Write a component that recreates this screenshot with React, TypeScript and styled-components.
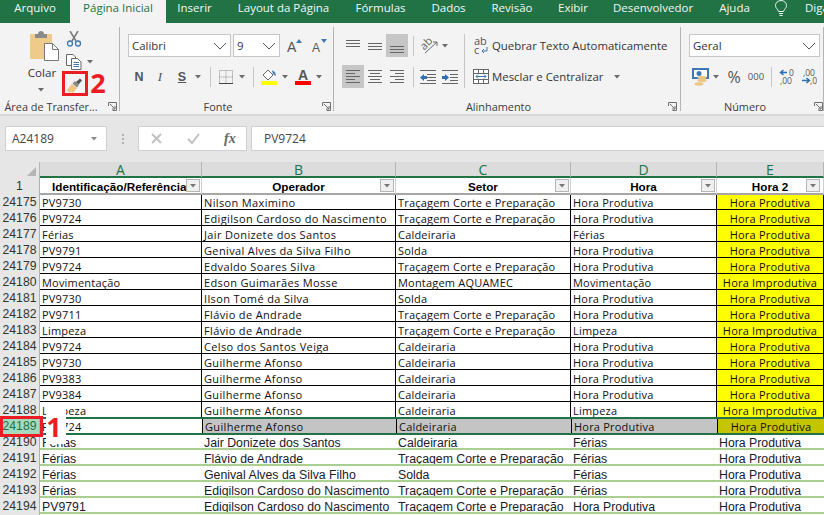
import React from "react";
import styled, { createGlobalStyle } from "styled-components";

const Global = createGlobalStyle`
  html, body { margin: 0; padding: 0; background: #fff; overflow: hidden; }
  #root { width: 824px; height: 515px; overflow: hidden; }
  * { box-sizing: border-box; }
`;
const UI = `"Open Sans", "Noto Sans", sans-serif`;
const Page = styled.div`position: relative; width: 824px; height: 515px; overflow: hidden; background: #fff; font-family: ${UI}; color: #333;`;

const TabBar = styled.div`display: flex; height: 23px; background: #217346; overflow: hidden;`;
const Tab = styled.div<{ $active?: boolean; $w: number }>`
  width: ${p => p.$w}px; flex: none; height: 23px; line-height: 16px; text-align: center; white-space: nowrap;
  font-size: 11.5px;
  color: ${p => (p.$active ? "#217346" : "#f2f7f4")};
  background: ${p => (p.$active ? "#f3f3f3" : "transparent")};
`;
const Bulb = styled.div`width: 25px; flex: none; margin-left: 3px; display: flex; justify-content: center;`;
const TellMe = styled.div`flex: none; padding-left: 12px; font-size: 11.5px; line-height: 16px; color: #f2f7f4; white-space: nowrap;`;

const Ribbon = styled.div`display: flex; height: 93px; background: #f3f3f3; border-bottom: 2px solid #d8d8d8;`;
const Group = styled.div<{ $w: number }>`
  position: relative; width: ${p => p.$w}px; flex: none; display: flex; flex-direction: column; height: 91px;
  &::after { content: ""; position: absolute; right: 0; top: 4px; bottom: 3px; width: 1px; background: #b4b4b4; }
`;
const GroupBody = styled.div`flex: 1; display: flex; min-height: 0;`;
const GroupFooter = styled.div<{ $pr: number }>`
  height: 16px; position: relative; text-align: center; font-size: 10.9px; line-height: 17px; white-space: nowrap; color: #3c3c3c;
  padding-right: ${p => p.$pr}px;
`;
const LauncherWrap = styled.span<{ $r: number }>`position: absolute; right: ${p => p.$r}px; top: 4px; display: block; width: 9px; height: 9px; line-height: 0;`;
const Launcher = ({ r }: { r: number }) => (
  <LauncherWrap $r={r}>
    <svg width="9" height="9" viewBox="0 0 9 9" fill="none" stroke="#707070" strokeWidth="1">
      <path d="M0.5 4V.5H8.5V8.5H4.5" /><path d="M2 2L7 7M7 4V7H4" />
    </svg>
  </LauncherWrap>
);

const ClipBody = styled.div`display: flex; padding: 8px 0 0 30px; width: 100%;`;
const PasteCol = styled.div`width: 36px; flex: none; display: flex; flex-direction: column; font-size: 11.6px; line-height: 15px; color: #333;`;
const PasteLabel = styled.div`margin: 4px 0 0 -3px; width: 30px; text-align: center;`;
const CaretRow = styled.div<{ $ml: number; $mt?: number }>`margin: ${p => p.$mt ?? 0}px 0 0 ${p => p.$ml}px; line-height: 0;`;
const ClipTools = styled.div`display: flex; flex-direction: column; gap: 7px; align-items: flex-start;`;
const ToolRow = styled.div`display: flex; align-items: center; gap: 5px; line-height: 0;`;

const Caret = ({ c = "#6a6a6a" }: { c?: string }) => (
  <svg width="6" height="4" viewBox="0 0 6 4"><path d="M0 0H6L3 3.5Z" fill={c} /></svg>
);
const Chevron = () => (
  <svg width="14" height="8" viewBox="0 0 14 8" fill="none" stroke="#555" strokeWidth="1"><path d="M1 1L7 7L13 1" /></svg>
);

const Stack = styled.div<{ $pl: number }>`display: flex; flex-direction: column; padding: 11px 0 0 ${p => p.$pl}px; gap: 8px;`;
const HRow = styled.div`display: flex; align-items: center; height: 23px; font-size: 11.6px; white-space: nowrap; color: #333;`;
const Combo = styled.div<{ $w: number }>`
  width: ${p => p.$w}px; height: 23px; flex: none; background: #fff; border: 1px solid #c6c6c6; display: flex; align-items: center; justify-content: space-between;
  padding: 0 3px; font-size: 11.4px; color: #333; margin-right: 2px;
`;
const Cell = styled.div<{ $w: number; $on?: boolean; $ml?: number }>`
  width: ${p => p.$w}px; flex: none; height: 23px; display: flex; align-items: center; justify-content: center; gap: 3px; line-height: 0;
  margin-left: ${p => p.$ml ?? 0}px;
  background: ${p => (p.$on ? "#c6c6c6" : "transparent")};
`;
const BoldLetter = styled.span<{ $s?: string; $f?: string; $u?: boolean }>`
  font: ${p => p.$s ?? "bold 12.5px"} ${p => p.$f ?? `"Liberation Sans"`}, sans-serif; color: #555; line-height: 14px;
  text-decoration: ${p => (p.$u ? "underline" : "none")};
`;
const VSep = styled.div<{ $ml?: number; $mr?: number; $h?: number }>`width: 1px; height: ${p => p.$h ?? 20}px; background: #c6c6c6; flex: none; margin: 0 ${p => p.$mr ?? 0}px 0 ${p => p.$ml ?? 0}px;`;

const LinesIcon = ({ y, x }: { y: number[]; x: [number, number][] }) => (
  <svg width="16" height="16" viewBox="0 0 16 16" stroke="#666" strokeWidth="1">
    {y.map((v, i) => <path key={i} d={`M${x[i][0]} ${v + 0.5}H${x[i][1]}`} />)}
  </svg>
);
const full: [number, number][] = [[1, 15], [1, 15], [1, 15]];
const short: [number, number][] = [[1, 15], [1, 10], [1, 15], [1, 10], [1, 15]];
const center: [number, number][] = [[1, 15], [3, 13], [1, 15], [3, 13], [1, 15]];
const right: [number, number][] = [[1, 15], [6, 15], [1, 15], [6, 15], [1, 15]];

const AlignBody = styled.div`display: flex; padding: 11px 0 0 8px;`;
const AlignColumn = styled.div`display: flex; flex-direction: column; gap: 8px;`;
const AlignActions = styled(AlignColumn)`padding-left: 8px;`;
const ActionRow = styled.div`display: flex; align-items: center; height: 23px; gap: 3px; font-size: 11.4px; color: #333; white-space: nowrap;`;
const CaretGap = styled.span`margin-left: 8px; line-height: 0;`;

const FormulaArea = styled.div`height: 46px; background: #e6e6e6; display: flex; padding: 10px 0 0 5px; align-items: flex-start;`;
const NameBox = styled.div`width: 102px; height: 25px; background: #fff; border: 1px solid #d0d0d0; display: flex; align-items: center; justify-content: space-between; padding: 0 9px 0 6px; font-size: 12px; color: #444;`;
const Dots = styled.div`width: 31px; flex: none; display: flex; flex-direction: column; align-items: center; justify-content: center; gap: 2px; height: 25px;`;
const Dot = styled.i`display: block; width: 2px; height: 2px; background: #b0b0b0;`;
const FxBox = styled.div`width: 109px; height: 25px; background: #fff; border: 1px solid #d0d0d0; display: flex; align-items: center; padding-left: 12px; margin-right: 4px;`;
const FxCross = styled.span`line-height: 0; margin-right: 25px;`;
const FxCheck = styled.span`line-height: 0; margin-right: 24px;`;
const Fx = styled.span`font: italic bold 14px "Liberation Serif", serif; color: #666;`;
const FormulaInput = styled.div`flex: 1; height: 25px; background: #fff; border: 1px solid #d0d0d0; border-right: none; display: flex; align-items: center; padding-left: 12px; font-size: 12px; color: #444;`;

const COLS = "40px 162px 194px 175px 146px 107px";
const ColHead = styled.div`display: grid; grid-template-columns: ${COLS}; height: 16px; background: #e6e6e6;`;
const Corner = styled.div`background: #e6e6e6; border-right: 1px solid #b5b5b5; display: flex; align-items: flex-end; justify-content: flex-end; padding: 0 3px 2px 0; line-height: 0;`;
const ColLetter = styled.div`
  background: #dcdcdc; border-right: 1px solid #b5b5b5; border-bottom: 2px solid #217346; color: #217346;
  font: 14px/15px "Open Sans", sans-serif; text-align: center; height: 16px;
`;
const Row = styled.div`display: grid; grid-template-columns: ${COLS}; height: 16px;`;
const RowNum = styled.div<{ $sel?: boolean }>`
  background: ${p => (p.$sel ? "#a6dabd" : "#e6e6e6")}; color: ${p => (p.$sel ? "#217346" : "#333")};
  border-right: 1px solid #b0b0b0;
  font: 12.2px/17px "Liberation Sans", sans-serif; text-align: center;
`;
const HeadCell = styled.div`
  position: relative; background: #fff; border-bottom: 2px solid #a6a6a6; border-right: 1px solid #d0d0d0;
  font: bold 11.7px/18px "Liberation Sans", sans-serif; color: #000; text-align: center; overflow: hidden; white-space: nowrap;
  &:last-child > span { right: 3px; }
`;
const HeadLeft = styled(HeadCell)`text-align: left; padding-left: 12px;`;
const Filter = styled.span`
  position: absolute; right: 1px; top: 1px; width: 14px; height: 13px; background: #f0f0f0; border: 1px solid #b5b5b5;
  display: flex; align-items: center; justify-content: center; line-height: 0;
`;
type V = "plain" | "active" | "light";
const DataCell = styled.div<{ $v: V; $y?: boolean; $first?: boolean }>`
  white-space: nowrap; overflow: hidden; height: 16px;
  ${p => p.$v === "light"
    ? `font: 12.3px/18px "Liberation Sans", sans-serif; color: #1a1a2a; background: #fff; border-bottom: 2px solid #a9d08e; padding-left: 2px;`
    : p.$v === "active"
    ? `font: 11px/17px "Open Sans", sans-serif; letter-spacing: .2px; color: #111; padding-left: ${p.$y ? 0 : 2}px; text-align: ${p.$y ? "center" : "left"};
       background: ${p.$first ? "#fff" : p.$y ? "#c4c400" : "#c4c4c4"}; border-left: ${p.$first ? "none" : "1px solid #000"};
       &:nth-child(3) { letter-spacing: .36px; }`
    : `font: 11px/17px "Open Sans", sans-serif; letter-spacing: .2px; color: #111; border-bottom: 1px solid #000; border-right: 1px solid #000;
       padding-left: ${p.$y ? 0 : 2}px; text-align: ${p.$y ? "center" : "left"}; background: ${p.$y ? "#ffff00" : "#fff"};
       &:nth-child(3) { letter-spacing: .36px; }`}
`;

const SelectionBand = styled.div`position: absolute; left: 40px; top: 417px; right: 0; height: 18px; border-top: 2px solid #217346; border-bottom: 2px solid #217346;`;
const Patch = styled.div`position: absolute; left: 46px; top: 404px; width: 20px; height: 40px; background: #fff;`;
const RedBox = styled.div<{ $l: number; $t: number; $w: number; $h: number }>`
  position: absolute; left: ${p => p.$l}px; top: ${p => p.$t}px; width: ${p => p.$w}px; height: ${p => p.$h}px; border: 3px solid #ed1c24;
`;
const Mark = styled.div<{ $l: number; $t: number }>`
  position: absolute; left: ${p => p.$l}px; top: ${p => p.$t}px; width: 20px; height: 26px;
  font: bold 27px/26px "Open Sans", sans-serif; color: #ed1c24; text-align: center;
`;

const T = "Traçagem Corte e Preparação", C = "Caldeiraria", H = "Hora Produtiva", I = "Hora Improdutiva", G = "Guilherme Afonso", E = "Edigilson Cardoso do Nascimento";
const rows: [number, string, string, string, string, string][] = [
  [24175, "PV9730", "Nilson Maximino", T, H, H],
  [24176, "PV9724", E, T, H, H],
  [24177, "Férias", "Jair Donizete dos Santos", C, "Férias", H],
  [24178, "PV9791", "Genival Alves da Silva Filho", "Solda", H, H],
  [24179, "PV9724", "Edvaldo Soares Silva", T, H, H],
  [24180, "Movimentação", "Edson Guimarães Mosse", "Montagem AQUAMEC", "Movimentação", I],
  [24181, "PV9730", "Ilson Tomé da Silva", "Solda", H, H],
  [24182, "PV9711", "Flávio de Andrade", T, H, H],
  [24183, "Limpeza", "Flávio de Andrade", T, "Limpeza", I],
  [24184, "PV9724", "Celso dos Santos Veiga", C, H, H],
  [24185, "PV9730", G, C, H, H],
  [24186, "PV9383", G, C, H, H],
  [24187, "PV9384", G, C, H, H],
  [24188, "Limpeza", G, C, "Limpeza", I],
  [24189, "PV9724", G, C, H, H],
  [24190, "Férias", "Jair Donizete dos Santos", C, "Férias", H],
  [24191, "Férias", "Flávio de Andrade", T, "Férias", H],
  [24192, "Férias", "Genival Alves da Silva Filho", "Solda", "Férias", H],
  [24193, "Férias", E, T, "Férias", H],
  [24194, "PV9791", E, T, H, H],
];
const heads = ["Operador", "Setor", "Hora", "Hora 2"];

export default function App() {
  return (
    <Page>
      <Global />
      <TabBar>
        <Tab $w={70}>Arquivo</Tab>
        <Tab $w={96} $active>Página Inicial</Tab>
        <Tab $w={57}>Inserir</Tab>
        <Tab $w={121}>Layout da Página</Tab>
        <Tab $w={73}>Fórmulas</Tab>
        <Tab $w={63}>Dados</Tab>
        <Tab $w={64}>Revisão</Tab>
        <Tab $w={58}>Exibir</Tab>
        <Tab $w={102}>Desenvolvedor</Tab>
        <Tab $w={61}>Ajuda</Tab>
        <Bulb>
          <svg width="14" height="17" viewBox="0 0 14 17" fill="none" stroke="#e8f1ec" strokeWidth="1"><path d="M4.5 11.5C4 9 1.5 8.5 1.5 5.5a5.5 5 0 0 1 11 0C12.5 8.5 10 9 9.5 11.5Z" /><path d="M5 13.5H9M5.5 15.5H8.5" /></svg>
        </Bulb>
        <TellMe>Diga</TellMe>
      </TabBar>

      <Ribbon>
        <Group $w={120}>
          <GroupBody>
            <ClipBody>
              <PasteCol>
                <svg width="29" height="30" viewBox="0 0 29 30">
                  <rect x="0" y="3" width="22" height="25" rx="1" fill="#eecb8a" />
                  <path d="M8 3C8 1 9.500 0 11 0S14 1 14 3H17V7H5V3Z" fill="#8a8a8a" />
                  <path d="M14.500 12.500H22.500L28.500 18.500V29.500H14.500Z" fill="#fff" stroke="#777" />
                  <path d="M22.500 12.500V18.500H28.500" fill="none" stroke="#777" />
                </svg>
                <PasteLabel>Colar</PasteLabel>
                <CaretRow $ml={8} $mt={8}><Caret /></CaretRow>
              </PasteCol>
              <ClipTools>
                <ToolRow>
                  <svg width="16" height="16" viewBox="0 0 16 16" fill="none">
                    <path d="M4 0L10 10M12 0L6 10" stroke="#7a7a7a" strokeWidth="1.5" />
                    <circle cx="4" cy="12.5" r="2.500" stroke="#3f78b5" strokeWidth="1.3" />
                    <circle cx="12" cy="12.5" r="2.500" stroke="#3f78b5" strokeWidth="1.3" />
                  </svg>
                </ToolRow>
                <ToolRow>
                  <svg width="16" height="16" viewBox="0 0 16 16" fill="#fff" stroke="#666">
                    <path d="M.5 .5H7L9.5 3V11.5H.5Z" /><path d="M5.5 4.5H11.5L15 8V15.5H5.5Z" />
                    <path d="M7.5 8.5H13M7.5 10.5H13M7.5 12.5H13" stroke="#3f78b5" />
                  </svg>
                  <Caret />
                </ToolRow>
                <ToolRow>
                  <svg width="18" height="18" viewBox="0 0 18 18">
                    <path d="M1 13L6 7L11 11L7 16L5 14.500L3 16Z" fill="#edc585" />
                    <path d="M6.500 6.500L9 4L13 8L11 10.500Z" fill="#8a8a8a" />
                    <path d="M10 5L14 1.500L16 3.500L12.500 7.500Z" fill="#555" />
                  </svg>
                </ToolRow>
              </ClipTools>
            </ClipBody>
          </GroupBody>
          <GroupFooter $pr={18}>Área de Transfer...<Launcher r={3} /></GroupFooter>
        </Group>

        <Group $w={214}>
          <GroupBody>
            <Stack $pl={8}>
              <HRow>
                <Combo $w={103}>Calibri<Chevron /></Combo>
                <Combo $w={47}>9<Chevron /></Combo>
                <Cell $w={22} $ml={2}>
                  <svg width="16" height="14" viewBox="0 0 16 14"><text x="0" y="13" fontFamily="Liberation Sans" fontSize="14" fill="#555">A</text><path d="M9 4L12 0L15 4Z" fill="#3f78b5" /></svg>
                </Cell>
                <Cell $w={22} $ml={2}>
                  <svg width="15" height="14" viewBox="0 0 15 14"><text x="0" y="13" fontFamily="Liberation Sans" fontSize="12" fill="#555">A</text><path d="M9 0H15L12 4Z" fill="#3f78b5" /></svg>
                </Cell>
              </HRow>
              <HRow>
                <Cell $w={22}><BoldLetter>N</BoldLetter></Cell>
                <Cell $w={20}><BoldLetter $s="italic 13px" $f={`"Liberation Serif"`}>I</BoldLetter></Cell>
                <Cell $w={24}><BoldLetter $u>S</BoldLetter></Cell>
                <Cell $w={8}><Caret /></Cell>
                <VSep $ml={8} $mr={5} />
                <Cell $w={20}>
                  <svg width="14" height="14" viewBox="0 0 14 14" fill="none" stroke="#8a8a8a" strokeDasharray="1 1"><path d="M.5 .5H13.5V13.5H.5ZM.5 7H13.5M7 .5V13.5" /><path d="M0 13.5H14" stroke="#444" strokeDasharray="none" /></svg>
                </Cell>
                <Cell $w={8} $ml={2}><Caret /></Cell>
                <VSep $ml={7} $mr={7} />
                <Cell $w={16}>
                  <svg width="16" height="17" viewBox="0 0 16 17"><path d="M2 7L7 2L12 7L7 12Z" fill="#fff" stroke="#666" /><path d="M11 2.500Q14.500 3 15 8L12 6Z" fill="#3f78b5" /><rect x="0" y="13" width="16" height="4" fill="#ffff00" /></svg>
                </Cell>
                <Cell $w={8} $ml={4}><Caret /></Cell>
                <Cell $w={16} $ml={6}>
                  <svg width="16" height="17" viewBox="0 0 16 17"><text x="3" y="12" fontFamily="Liberation Sans" fontWeight="bold" fontSize="14" fill="#555">A</text><rect x="0" y="13" width="16" height="4" fill="#ff0000" /></svg>
                </Cell>
                <Cell $w={8} $ml={4}><Caret /></Cell>
              </HRow>
            </Stack>
          </GroupBody>
          <GroupFooter $pr={18}>Fonte<Launcher r={3} /></GroupFooter>
        </Group>

        <Group $w={347}>
          <GroupBody>
            <AlignBody>
              <AlignColumn>
                <HRow>
                  <Cell $w={22}><LinesIcon y={[2, 5, 8]} x={full} /></Cell>
                  <Cell $w={22}><LinesIcon y={[5, 8, 11]} x={full} /></Cell>
                  <Cell $w={22} $on><LinesIcon y={[8, 11, 14]} x={full} /></Cell>
                  <VSep $ml={5} $mr={5} />
                  <Cell $w={30}>
                    <svg width="18" height="17" viewBox="0 0 18 17" fill="none"><text x="0" y="10" fontFamily="Open Sans" fontSize="11" fill="#666" transform="rotate(-45 6 8)">ab</text><path d="M4 16L16 5M16 5H12M16 5V9" stroke="#666" /></svg>
                    <Caret />
                  </Cell>
                </HRow>
                <HRow>
                  <Cell $w={22} $on><LinesIcon y={[1, 4, 7, 10, 13]} x={short} /></Cell>
                  <Cell $w={22}><LinesIcon y={[1, 4, 7, 10, 13]} x={center} /></Cell>
                  <Cell $w={22}><LinesIcon y={[1, 4, 7, 10, 13]} x={right} /></Cell>
                  <VSep $ml={5} $mr={3} />
                  <Cell $w={22}>
                    <svg width="16" height="14" viewBox="0 0 16 14" fill="none"><path d="M0 .5H16M7 4.5H16M7 7.5H16M7 10.5H16M0 13.5H16" stroke="#666" /><path d="M0 7.500L4 4V6H7V9H4V11Z" fill="#2f6fb5" /></svg>
                  </Cell>
                  <Cell $w={22}>
                    <svg width="16" height="14" viewBox="0 0 16 14" fill="none"><path d="M0 .5H16M8 4.5H16M8 7.5H16M8 10.5H16M0 13.5H16" stroke="#666" /><path d="M7 7.500L3 4V6H0V9H3V11Z" fill="#2f6fb5" /></svg>
                  </Cell>
                </HRow>
              </AlignColumn>
              <VSep $ml={3} $h={54} />
              <AlignActions>
                <ActionRow>
                  <svg width="16" height="19" viewBox="0 0 16 19" fill="none">
                    <text x="1" y="9" fontFamily="Open Sans" fontSize="11" fill="#555">ab</text>
                    <text x="1" y="18" fontFamily="Open Sans" fontSize="11" fill="#555">c</text>
                    <path d="M14 11V15H9M11 13L9 15L11 17" stroke="#3f78b5" />
                  </svg>
                  <span>Quebrar Texto Automaticamente</span>
                </ActionRow>
                <ActionRow>
                  <svg width="16" height="15" viewBox="0 0 16 15" fill="#fff" stroke="#666"><rect x=".5" y=".5" width="15" height="14" /><path d="M.5 4.5H15.5M.5 10.5H15.5M5.5 .5V4.5M10.5 .5V4.5M5.5 10.5V14.5M10.5 10.5V14.5" /><path d="M3 7.5H13M5 5.500L3 7.5L5 9.500M11 5.500L13 7.5L11 9.500" stroke="#3f78b5" fill="none" /></svg>
                  <span>Mesclar e Centralizar</span>
                  <CaretGap><Caret /></CaretGap>
                </ActionRow>
              </AlignActions>
            </AlignBody>
          </GroupBody>
          <GroupFooter $pr={18}>Alinhamento<Launcher r={4} /></GroupFooter>
        </Group>

        <Group $w={143}>
          <GroupBody>
            <Stack $pl={8}>
              <HRow>
                <Combo $w={131}>Geral<Chevron /></Combo>
              </HRow>
              <HRow>
                <Cell $w={22}>
                  <svg width="17" height="18" viewBox="0 0 17 18"><rect x="1" y="1" width="15" height="9" fill="#fff" stroke="#3f78b5" strokeWidth="2" /><circle cx="7" cy="5.500" r="2.500" fill="#3f78b5" /><ellipse cx="10" cy="9.500" rx="4.500" ry="1.700" fill="#edc585" /><ellipse cx="10" cy="12.500" rx="4.500" ry="1.700" fill="#edc585" /><ellipse cx="7" cy="16" rx="4.500" ry="1.700" fill="#edc585" /></svg>
                </Cell>
                <Cell $w={10}><Caret /></Cell>
                <Cell $w={22} $ml={2}><BoldLetter $s="16px" $f={`"Open Sans"`}>%</BoldLetter></Cell>
                <Cell $w={22}><BoldLetter $s="9.5px" $f={`"Open Sans"`}>000</BoldLetter></Cell>
                <VSep $ml={4} $mr={3} />
                <Cell $w={24}>
                  <svg width="16" height="16" viewBox="0 0 16 16"><path d="M8 3.500H2M4.500 1L1.500 3.500L4.500 6" fill="none" stroke="#2f6fb5" strokeWidth="1.500" /><text x="10" y="7" fontFamily="Open Sans" fontSize="8.500" fill="#555">0</text><text x="1" y="15" fontFamily="Open Sans" fontSize="8.500" fill="#555">,00</text></svg>
                </Cell>
                <Cell $w={20}>
                  <svg width="16" height="16" viewBox="0 0 16 16"><text x="2" y="7" fontFamily="Open Sans" fontSize="8.500" fill="#555">,00</text><path d="M1 11.500H8M5.500 9L8.500 11.500L5.500 14" fill="none" stroke="#2f6fb5" strokeWidth="1.500" /><text x="9" y="15" fontFamily="Open Sans" fontSize="8.500" fill="#555">,0</text></svg>
                </Cell>
              </HRow>
            </Stack>
          </GroupBody>
          <GroupFooter $pr={15}>Número<Launcher r={1} /></GroupFooter>
        </Group>
      </Ribbon>

      <FormulaArea>
        <NameBox>A24189<Caret c="#888" /></NameBox>
        <Dots><Dot /><Dot /><Dot /></Dots>
        <FxBox>
          <FxCross><svg width="11" height="11" viewBox="0 0 11 11" stroke="#c0c0c0" strokeWidth="1.800" fill="none"><path d="M1 1L10 10M10 1L1 10" /></svg></FxCross>
          <FxCheck><svg width="13" height="11" viewBox="0 0 13 11" stroke="#c0c0c0" strokeWidth="2" fill="none"><path d="M1 6L5 10L12 1" /></svg></FxCheck>
          <Fx>fx</Fx>
        </FxBox>
        <FormulaInput>PV9724</FormulaInput>
      </FormulaArea>

      <ColHead>
        <Corner><svg width="9" height="9" viewBox="0 0 9 9"><path d="M9 0V9H0Z" fill="#b5b5b5" /></svg></Corner>
        {["A", "B", "C", "D", "E"].map(l => <ColLetter key={l}>{l}</ColLetter>)}
      </ColHead>

      <Row>
        <RowNum>1</RowNum>
        <HeadLeft>Identificação/Referência<Filter><Caret c="#777" /></Filter></HeadLeft>
        {heads.map(h => <HeadCell key={h}>{h}<Filter><Caret c="#777" /></Filter></HeadCell>)}
      </Row>

      {rows.map((r, i) => {
        const v: V = i === 14 ? "active" : i > 14 ? "light" : "plain";
        return (
          <Row key={r[0]}>
            <RowNum $sel={v === "active"}>{r[0]}</RowNum>
            <DataCell $v={v} $first>{r[1]}</DataCell>
            <DataCell $v={v}>{r[2]}</DataCell>
            <DataCell $v={v}>{r[3]}</DataCell>
            <DataCell $v={v}>{r[4]}</DataCell>
            <DataCell $v={v} $y>{r[5]}</DataCell>
          </Row>
        );
      })}

      <SelectionBand />
      <RedBox $l={62} $t={71} $w={26} $h={25} />
      <Mark $l={88} $t={70}>2</Mark>
      <Patch />
      <Mark $l={44} $t={414}>1</Mark>
      <RedBox $l={0} $t={416} $w={43} $h={21} />
    </Page>
  );
}
